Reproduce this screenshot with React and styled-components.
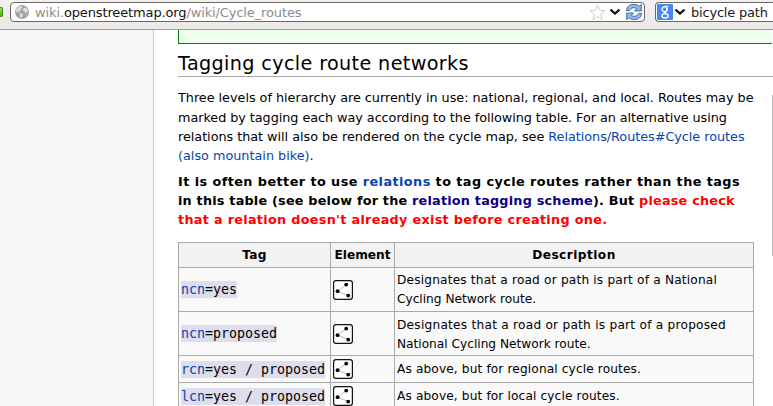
import React from "react";
import styled, { createGlobalStyle } from "styled-components";

const Global = createGlobalStyle`
  * { box-sizing: border-box; }
  html, body { margin: 0; height: 100%; overflow: hidden; background: #fff; }
  body { font-family: "DejaVu Sans", sans-serif; color: #000; }
`;

const Page = styled.div`
  width: 773px;
  height: 406px;
  overflow: hidden;
  display: flex;
  flex-direction: column;
`;

const Toolbar = styled.header`
  flex: none;
  height: 30px;
  padding-top: 2px;
  display: flex;
  align-items: flex-start;
  background: linear-gradient(#f2f1f0, #ebe9e7);
  border-bottom: 1px solid #a19d98;
`;

const IdentityButton = styled.div`
  flex: none;
  width: 3px;
  height: 10px;
  margin: 5px 7px 0 0;
  border: 1px solid #3d8c0b;
  border-left: 0;
  border-radius: 0 2px 2px 0;
  background: linear-gradient(#8fe04a, #4fb013);
`;

const Field = styled.div`
  flex: none;
  display: flex;
  align-items: center;
  width: ${(p) => p.$width}px;
  height: 20px;
  background: #fff;
  border: 1px solid #6b6863;
  border-radius: 4px;
  font-size: 13px;
  line-height: 16px;
  white-space: pre;
  svg { flex: none; display: block; }
`;

const AddressField = styled(Field)`
  padding-left: 4px;
  margin-right: 10px;
`;

const SearchField = styled(Field)`
  padding-left: 1px;
  border-radius: 4px 0 0 4px;
  border-right: 0;
`;

const Url = styled.span`
  flex: 1;
  margin-left: 6px;
  padding-top: 2px;
  color: #8d8d8d;
  letter-spacing: -0.13px;
  b { font-weight: 400; color: #111; }
`;

const Query = styled.span`
  margin-left: 5px;
  padding-top: 2px;
  color: #1a1a1a;
  letter-spacing: -0.2px;
`;

const Body = styled.div`
  flex: 1;
  min-height: 0;
  display: flex;
`;

const Sidebar = styled.aside`
  flex: none;
  width: 154px;
  background: #f6f6f6;
  border-right: 1px solid #a7d7f9;
`;

const Article = styled.main`
  flex: none;
  width: 618px;
  padding-left: 24px;
`;

const GreenBox = styled.div`
  height: 14px;
  background: #eeffee;
  border: 1px solid #008000;
  border-width: 0 0 1px 1px;
`;

const Heading = styled.h2`
  margin: 0 0 11.4px;
  width: 595px;
  height: 33px;
  padding-top: 7px;
  border-bottom: 1px solid #aaa;
  font-size: 19.2px;
  line-height: 25px;
  font-weight: 400;
  letter-spacing: 0.36px;
`;

const Paragraph = styled.p`
  margin: 0 0 ${(p) => p.$after}px;
  font-size: 12.8px;
  line-height: 19.2px;
  font-weight: ${(p) => (p.$bold ? 700 : 400)};
`;

const Line = styled.span`
  display: block;
  white-space: nowrap;
  letter-spacing: ${(p) => p.$track || 0}px;
`;

const Link = styled.a`
  color: ${(p) => p.$color || "#0645ad"};
`;

const Warning = styled.span`
  color: #f00;
`;

const Table = styled.table`
  width: 576px;
  table-layout: fixed;
  border-collapse: collapse;
  background: #f9f9f9;
  font-size: 12.16px;
  line-height: 19.2px;
  th, td { border: 1px solid #aaa; padding: 0 2px; vertical-align: middle; }
`;

const HeaderCell = styled.th`
  width: ${(p) => (p.$width ? `${p.$width}px` : "auto")};
  background: #f2f2f2;
  letter-spacing: ${(p) => p.$track}px;
`;

const Row = styled.tr`
  height: ${(p) => p.$height}px;
`;

const Code = styled.code`
  display: block;
  width: max-content;
  height: 17px;
  background: #ddddee;
  font: 13.3px/17px "DejaVu Sans Mono", monospace;
  white-space: pre;
`;

const IconCell = styled.td`
  svg { display: block; }
`;

const Description = styled.div`
  padding-top: ${(p) => p.$shift || 0}px;
`;

const Gutter = styled.div`
  flex: none;
  width: 1px;
  height: 161px;
  margin-top: 65px;
  background: #bbb;
`;

const Spacer = styled.span`
  flex: none;
  width: ${(p) => p.$w}px;
`;

const Globe = () => (
  <svg width="14" height="14" viewBox="0 0 14 14">
    <circle cx="7" cy="7" r="7" fill="#a2a2a2" />
    <path d="M1.2 4.2 3.6 1.6 6.4 1 7.6 2.4 6 3.2 6.6 4.6 4.8 5.6 4.4 7.2 2.6 6.8 1 7.8ZM8.2 3.6 10.6 2.2 12.6 4.4 13.2 7.4 11.6 6.6 10.8 8.4 9.4 6.6 7.8 5.6ZM4.6 8 7.6 8.8 8 10.4 6.4 12.8 5 12.4 4.8 10.2ZM10.8 10 12 9.6 10.8 11.4Z" fill="#dedede" />
  </svg>
);

const Star = () => (
  <svg width="17" height="17" viewBox="0 0 17 17">
    <path d="M8.5 1.2 10.5 6.3 16 6.7 11.8 10.2 13.1 15.6 8.5 12.6 3.9 15.6 5.2 10.2 1 6.7 6.5 6.3Z" fill="#fff" stroke="#cdcdcd" strokeLinejoin="round" />
  </svg>
);

const Chevron = () => (
  <svg width="12" height="8" viewBox="0 0 12 8">
    <path d="M1.5 1.6 6 5.6 10.5 1.6" fill="none" stroke="#111" strokeWidth="2.1" />
  </svg>
);

const GoogleBadge = () => (
  <svg width="16" height="16" viewBox="0 0 16 16">
    <rect width="16" height="16" rx="1" fill="#4688f1" />
    <g fill="none" stroke="#fff" strokeWidth="1.4">
      <ellipse cx="7.6" cy="5.2" rx="2.5" ry="2.6" />
      <path d="M8 2.2H11.6M9.3 3Q10.6 4.4 9.8 6.2" strokeWidth="1" />
      <path d="M8.3 7.8Q7 8.8 8.6 9.6" />
      <ellipse cx="8" cy="11.8" rx="3.2" ry="2.2" />
    </g>
  </svg>
);

const Reload = () => (
  <svg width="18" height="18" viewBox="0 0 18 18">
    <g fill="#94b8e4" stroke="#2f609f" strokeWidth=".9" strokeLinejoin="round">
      <path d="M1.5 7.5C1.7 3.8 4.6 1.4 8.6 1.4 11 1.4 12.8 2 14.2 3.2L16.3 1.4V8H9.5L11.8 5.6C9.8 4.2 6.3 4.1 4.5 7.5Z" />
      <path d="M16.5 10.5C16.3 14.2 13.4 16.6 9.4 16.6 7 16.6 5.2 16 3.8 14.8L1.7 16.6V10H8.5L6.2 12.4C8.2 13.8 11.7 13.9 13.5 10.5Z" />
    </g>
  </svg>
);

const RelationIcon = () => (
  <svg width="20" height="20" viewBox="0 0 20 20">
    <rect x=".6" y=".6" width="18.8" height="18.8" rx="2.4" fill="#fff" stroke="#111" strokeWidth="1.2" />
    <path d="M13.2 4.6 4.6 11.2 15.2 15.6" fill="none" stroke="#bbb" />
    <circle cx="13.2" cy="4.6" r="1.9" />
    <circle cx="4.6" cy="11.2" r="1.9" />
    <circle cx="15.2" cy="15.6" r="1.9" />
  </svg>
);

const ROWS = [
  {
    height: 44, tag: "ncn", value: "=yes", shift: 0.8,
    lines: [["Designates that a road or path is part of a National", 0.18], ["Cycling Network route.", 0]],
  },
  {
    height: 44, tag: "ncn", value: "=proposed", shift: 1.6,
    lines: [["Designates that a road or path is part of a proposed", 0.24], ["National Cycling Network route.", 0]],
  },
  { height: 27, tag: "rcn", value: "=yes / proposed", lines: [["As above, but for regional cycle routes.", 0.13]] },
  { height: 27, tag: "lcn", value: "=yes / proposed", lines: [["As above, but for local cycle routes.", 0.13]] },
];

export default function App() {
  return (
    <Page>
      <Global />
      <Toolbar>
        <IdentityButton />
        <AddressField $width={635}>
          <Globe />
          <Url>wiki.<b>openstreetmap.org</b>/wiki/Cycle_routes</Url>
          <Star />
          <Spacer $w={3} />
          <Chevron />
          <Spacer $w={4} />
          <Reload />
          <Spacer $w={1} />
        </AddressField>
        <SearchField $width={118}>
          <GoogleBadge />
          <Spacer $w={1} />
          <Chevron />
          <Query>bicycle path</Query>
        </SearchField>
      </Toolbar>
      <Body>
        <Sidebar />
        <Article>
          <GreenBox />
          <Heading>Tagging cycle route networks</Heading>
          <Paragraph $after={6.8}>
            <Line $track={-0.022}>Three levels of hierarchy are currently in use: national, regional, and local. Routes may be</Line>
            <Line $track={-0.05}>marked by tagging each way according to the following table. For an alternative using</Line>
            <Line $track={-0.03}>relations that will also be rendered on the cycle map, see <Link>Relations/Routes#Cycle routes</Link></Line>
            <Line><Link>(also mountain bike)</Link>.</Line>
          </Paragraph>
          <Paragraph $bold $after={12.8}>
            <Line $track={0.44}>It is often better to use <Link>relations</Link> to tag cycle routes rather than the tags</Line>
            <Line $track={0.21}>in this table (see below for the <Link $color="#0b0080">relation tagging scheme</Link>). But <Warning>please check</Warning></Line>
            <Line $track={0.3}><Warning>that a relation doesn't already exist before creating one.</Warning></Line>
          </Paragraph>
          <Table>
            <thead>
              <Row $height={25}>
                <HeaderCell $width={152} $track={0.3}>Tag</HeaderCell>
                <HeaderCell $width={64} $track={0}>Element</HeaderCell>
                <HeaderCell $track={0.45}>Description</HeaderCell>
              </Row>
            </thead>
            <tbody>
              {ROWS.map((row) => (
                <Row key={row.tag + row.value} $height={row.height}>
                  <td><Code><Link>{row.tag}</Link>{row.value}</Code></td>
                  <IconCell><RelationIcon /></IconCell>
                  <td>
                    <Description $shift={row.shift}>
                      {row.lines.map(([text, track]) => <Line key={text} $track={track}>{text}</Line>)}
                    </Description>
                  </td>
                </Row>
              ))}
            </tbody>
          </Table>
        </Article>
        <Gutter />
      </Body>
    </Page>
  );
}
